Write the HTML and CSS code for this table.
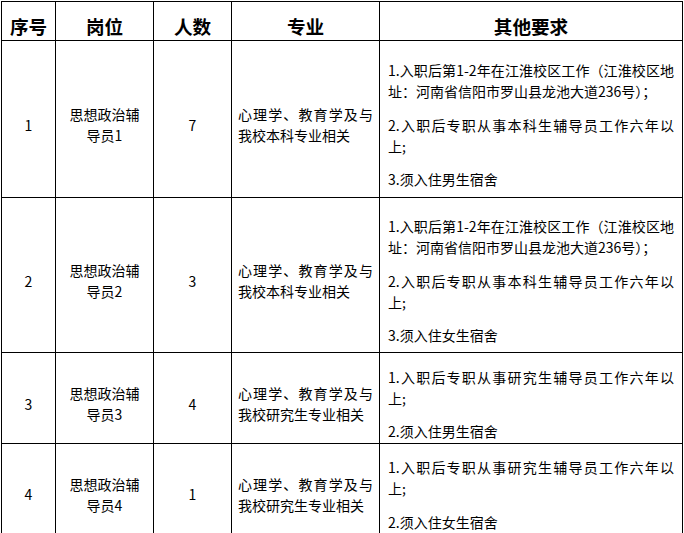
FILE: index.html
```html
<!DOCTYPE html>
<html lang="zh">
<head>
<meta charset="utf-8">
<title>招聘岗位</title>
<link rel="stylesheet" href="styles.css">
</head>
<body>
<table class="jobs">
  <colgroup>
    <col class="c-no"><col class="c-pos"><col class="c-num"><col class="c-major"><col class="c-req">
  </colgroup>
  <thead>
    <tr class="r-head">
      <th><p>序号</p></th>
      <th><p>岗位</p></th>
      <th><p>人数</p></th>
      <th><p>专业</p></th>
      <th><p>其他要求</p></th>
    </tr>
  </thead>
  <tbody>
    <tr class="r-1">
      <td class="center"><p>1</p></td>
      <td class="center"><p>思想政治辅<br>导员1</p></td>
      <td class="center"><p>7</p></td>
      <td class="major"><p><span class="just">心理学、教育学及与</span><span class="ln">我校本科专业相关</span></p></td>
      <td class="req">
        <p><span class="just">1.入职后第1-2年在江淮校区工作（江淮校区地</span><span class="ln">址：河南省信阳市罗山县龙池大道236号）；</span></p>
        <p><span class="just">2.入职后专职从事本科生辅导员工作六年以</span><span class="ln">上;</span></p>
        <p>3.须入住男生宿舍</p>
      </td>
    </tr>
    <tr class="r-2">
      <td class="center"><p>2</p></td>
      <td class="center"><p>思想政治辅<br>导员2</p></td>
      <td class="center"><p>3</p></td>
      <td class="major"><p><span class="just">心理学、教育学及与</span><span class="ln">我校本科专业相关</span></p></td>
      <td class="req">
        <p><span class="just">1.入职后第1-2年在江淮校区工作（江淮校区地</span><span class="ln">址：河南省信阳市罗山县龙池大道236号）；</span></p>
        <p><span class="just">2.入职后专职从事本科生辅导员工作六年以</span><span class="ln">上;</span></p>
        <p>3.须入住女生宿舍</p>
      </td>
    </tr>
    <tr class="r-3">
      <td class="center"><p>3</p></td>
      <td class="center"><p>思想政治辅<br>导员3</p></td>
      <td class="center"><p>4</p></td>
      <td class="major"><p><span class="just">心理学、教育学及与</span><span class="ln">我校研究生专业相关</span></p></td>
      <td class="req">
        <p><span class="just">1.入职后专职从事研究生辅导员工作六年以</span><span class="ln">上;</span></p>
        <p>2.须入住男生宿舍</p>
      </td>
    </tr>
    <tr class="r-4">
      <td class="center"><p>4</p></td>
      <td class="center"><p>思想政治辅<br>导员4</p></td>
      <td class="center"><p>1</p></td>
      <td class="major"><p><span class="just">心理学、教育学及与</span><span class="ln">我校研究生专业相关</span></p></td>
      <td class="req">
        <p><span class="just">1.入职后专职从事研究生辅导员工作六年以</span><span class="ln">上;</span></p>
        <p>2.须入住女生宿舍</p>
      </td>
    </tr>
  </tbody>
</table>
</body>
</html>
```
FILE: styles.css
```css
html, body {
  margin: 0;
  padding: 0;
  background: #fff;
}
body {
  padding: 1px 0 0 1px;
  font-family: "Noto Sans CJK SC", "Noto Sans", sans-serif;
  color: #000;
}
.jobs {
  border-collapse: collapse;
  table-layout: fixed;
  width: 681px;
}
.c-no { width: 54px; }
.c-pos { width: 98px; }
.c-num { width: 78px; }
.c-major { width: 148px; }
.c-req { width: 303px; }
.jobs th, .jobs td {
  border: 1px solid #000;
  padding: 0;
  vertical-align: middle;
}
.jobs p {
  margin: 12px 0 0 0;
}
.jobs th {
  font-size: 18.6px;
  font-weight: 700;
  line-height: 24px;
  text-align: center;
  padding-bottom: 2px;
}
.jobs td {
  font-size: 14px;
  line-height: 21px;
}
.r-head { height: 38px; }
.r-1 { height: 157px; }
.r-2 { height: 155px; }
.r-3 { height: 91px; }
.r-4 { height: 90px; }
.center { text-align: center; }
.major { padding: 0 6px !important; text-align: left; }
.req { padding: 0 8px !important; text-align: left; }
.req p { margin-top: 12.5px; }
.just {
  display: block;
  text-align: justify;
  text-align-last: justify;
}
.ln { display: block; }
```
